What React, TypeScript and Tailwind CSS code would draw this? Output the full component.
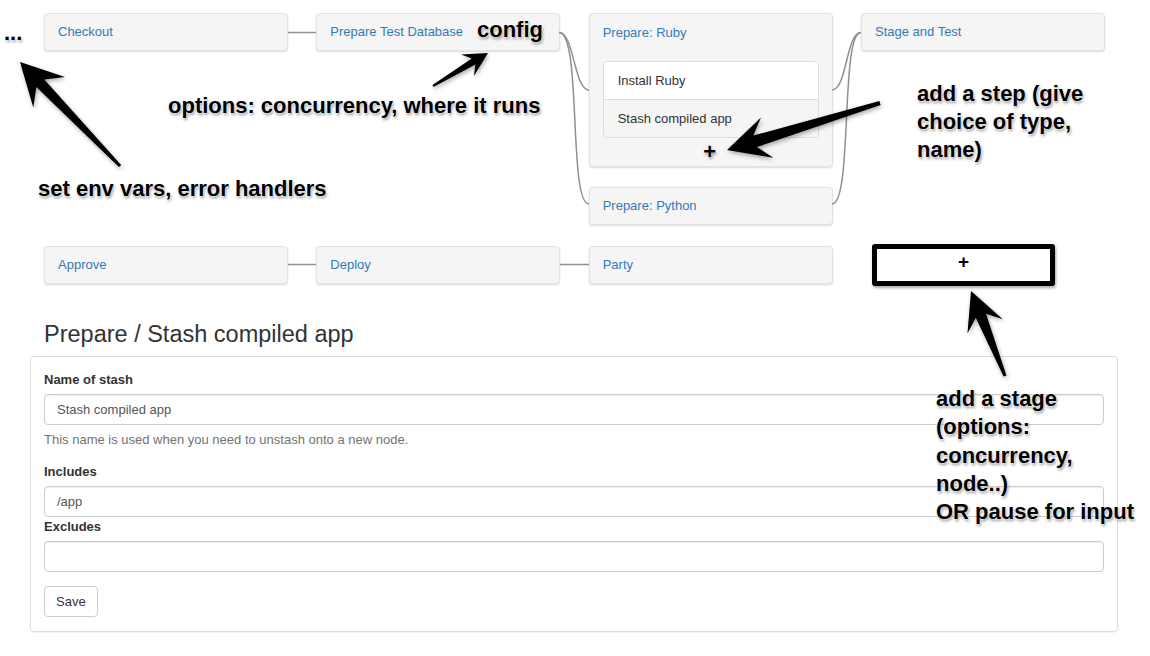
import React from "react";

type Pt = [number, number];

// tapered Skitch-style arrow, tail -> tip
function arrowPoints(
  tail: Pt,
  tip: Pt,
  headLen: number,
  headW: number,
  w0: number,
  w1: number
): string {
  const [x1, y1] = tail;
  const [x2, y2] = tip;
  const len = Math.hypot(x2 - x1, y2 - y1);
  const ux = (x2 - x1) / len;
  const uy = (y2 - y1) / len;
  const nx = -uy;
  const ny = ux;
  const bx = x2 - ux * headLen;
  const by = y2 - uy * headLen;
  const jx = bx + ux * headLen * 0.3;
  const jy = by + uy * headLen * 0.3;
  const pts: Pt[] = [
    [x1 + (nx * w0) / 2, y1 + (ny * w0) / 2],
    [jx + (nx * w1) / 2, jy + (ny * w1) / 2],
    [bx + (nx * headW) / 2, by + (ny * headW) / 2],
    [x2, y2],
    [bx - (nx * headW) / 2, by - (ny * headW) / 2],
    [jx - (nx * w1) / 2, jy - (ny * w1) / 2],
    [x1 - (nx * w0) / 2, y1 - (ny * w0) / 2],
  ];
  return pts.map((p) => `${p[0].toFixed(1)},${p[1].toFixed(1)}`).join(" ");
}

const arrows = [
  { tail: [120, 166] as Pt, tip: [20, 62] as Pt, L: 42, W: 44, w0: 3, w1: 11 },
  { tail: [433, 86] as Pt, tip: [488, 53] as Pt, L: 24, W: 25, w0: 2, w1: 7 },
  { tail: [880, 103] as Pt, tip: [727, 150] as Pt, L: 42, W: 42, w0: 4, w1: 12 },
  { tail: [1005, 376] as Pt, tip: [971, 291] as Pt, L: 38, W: 38, w0: 3, w1: 11 },
];

const note =
  "absolute font-bold text-black whitespace-nowrap [text-shadow:0_0_2px_#fff,0_0_2px_#fff,1px_2px_3px_rgba(0,0,0,0.45)]";

const StageBox: React.FC<{ title: string }> = ({ title }) => (
  <div className="h-[38px] flex items-center px-[13px] bg-[#f5f5f5] border border-[#e3e3e3] rounded-[4px] shadow-[0_1px_2px_rgba(0,0,0,0.15)] text-[13px] text-[#337ab7]">
    {title}
  </div>
);

const Field: React.FC<{ value?: string }> = ({ value }) => (
  <div className="h-[31px] flex items-center px-[12px] bg-white border border-[#ccc] rounded-[4px] shadow-[inset_0_1px_1px_rgba(0,0,0,0.075)] text-[13px] text-[#555]">
    {value}
  </div>
);

export default function App() {
  return (
    <div className="relative w-[1150px] h-[656px] overflow-hidden bg-white font-['Liberation_Sans',Arial,sans-serif] text-[#333]">
      {/* pipeline */}
      <div className="pl-[44px] pt-[13px]">
        <div className="grid grid-cols-[repeat(4,244px)] gap-x-[28.33px] items-start">
          <StageBox title="Checkout" />
          <StageBox title="Prepare Test Database" />
          <div className="flex flex-col gap-[20px]">
            <div className="bg-[#f5f5f5] border border-[#e3e3e3] rounded-[4px] shadow-[0_1px_2px_rgba(0,0,0,0.15)]">
              <div className="h-[37px] flex items-center px-[13px] text-[13px] text-[#337ab7]">
                Prepare: Ruby
              </div>
              <div className="mx-[13px] mt-[10px] border border-[#ddd] rounded-[4px] overflow-hidden text-[13px] text-[#333]">
                <div className="h-[38px] flex items-center px-[14px] bg-white border-b border-[#ddd]">
                  Install Ruby
                </div>
                <div className="h-[37px] flex items-center px-[14px] bg-[#f5f5f5]">
                  Stash compiled app
                </div>
              </div>
              <div className="h-[28px] flex items-center justify-center pr-[2px]">
                <span className="font-bold text-[22px] leading-none text-black [text-shadow:0_0_2px_#fff,1px_2px_3px_rgba(0,0,0,0.45)]">
                  +
                </span>
              </div>
            </div>
            <StageBox title="Prepare: Python" />
          </div>
          <StageBox title="Stage and Test" />
        </div>

        <div className="grid grid-cols-[repeat(4,244px)] gap-x-[28.33px] items-start mt-[21px]">
          <StageBox title="Approve" />
          <StageBox title="Deploy" />
          <StageBox title="Party" />
          <div className="ml-[11px] -mt-[2px] w-[183px] h-[42px] border-[5px] border-black rounded-[3px] bg-white flex justify-center pt-[3px] shadow-[1px_2px_3px_rgba(0,0,0,0.35)]">
            <span className="font-bold text-[19px] leading-none text-black">+</span>
          </div>
        </div>
      </div>

      {/* step editor */}
      <h3 className="ml-[44px] mt-[35px] text-[23.5px] leading-[26px] text-[#333]">
        Prepare / Stash compiled app
      </h3>
      <div className="ml-[30px] mr-[32px] mt-[9px] border border-[#ddd] rounded-[4px] shadow-[0_1px_1px_rgba(0,0,0,0.05)] px-[13px] pt-[14px] pb-[14px]">
        <div className="text-[13px] leading-[18px] font-bold text-[#333]">Name of stash</div>
        <div className="mt-[5px]">
          <Field value="Stash compiled app" />
        </div>
        <div className="mt-[6px] text-[13px] leading-[17px] text-[#737373]">
          This name is used when you need to unstash onto a new node.
        </div>
        <div className="mt-[15px] text-[13px] leading-[18px] font-bold text-[#333]">Includes</div>
        <div className="mt-[5px]">
          <Field value="/app" />
        </div>
        <div className="mt-[1px] text-[13px] leading-[18px] font-bold text-[#333]">Excludes</div>
        <div className="mt-[5px]">
          <Field />
        </div>
        <button className="mt-[14px] h-[31px] px-[11px] bg-white border border-[#ccc] rounded-[4px] text-[13px] text-[#333]">
          Save
        </button>
      </div>

      {/* connectors */}
      <svg
        className="absolute inset-0 pointer-events-none"
        width={1150}
        height={656}
        viewBox="0 0 1150 656"
      >
        <g stroke="#8f8f8f" strokeWidth={1.5} fill="none">
          <path d="M288 32.5 H316" />
          <path d="M559 32.5 C574 32 574 90 589 90" />
          <path d="M559 32.5 C582 32 568 204 589 204" />
          <path d="M832 90 C847 90 846 32.5 861 32.5" />
          <path d="M832 204 C853 204 840 32.5 861 32.5" />
          <path d="M288 264.5 H316" />
          <path d="M560 264.5 H589" />
        </g>
      </svg>

      {/* annotations */}
      <svg
        className="absolute inset-0 pointer-events-none drop-shadow-[1px_2px_2px_rgba(0,0,0,0.35)]"
        width={1150}
        height={656}
        viewBox="0 0 1150 656"
      >
        {arrows.map((a, i) => (
          <polygon key={i} points={arrowPoints(a.tail, a.tip, a.L, a.W, a.w0, a.w1)} fill="#000" />
        ))}
      </svg>

      <div className={`${note} left-[4px] top-[19px] text-[22px] leading-[28px]`}>...</div>
      <div className={`${note} left-[477px] top-[19px] text-[22px] leading-[22px]`}>config</div>
      <div className={`${note} left-[168px] top-[92px] text-[22px] leading-[28px]`}>
        options: concurrency, where it runs
      </div>
      <div className={`${note} left-[38px] top-[175px] text-[22px] leading-[28px]`}>
        set env vars, error handlers
      </div>
      <div className={`${note} left-[917px] top-[80px] text-[22px] leading-[28px]`}>
        add a step (give
        <br />
        choice of type,
        <br />
        name)
      </div>
      <div className={`${note} left-[936px] top-[385px] text-[22px] leading-[28.3px]`}>
        add a stage
        <br />
        (options:
        <br />
        concurrency,
        <br />
        node..)
        <br />
        OR pause for input
      </div>
    </div>
  );
}
